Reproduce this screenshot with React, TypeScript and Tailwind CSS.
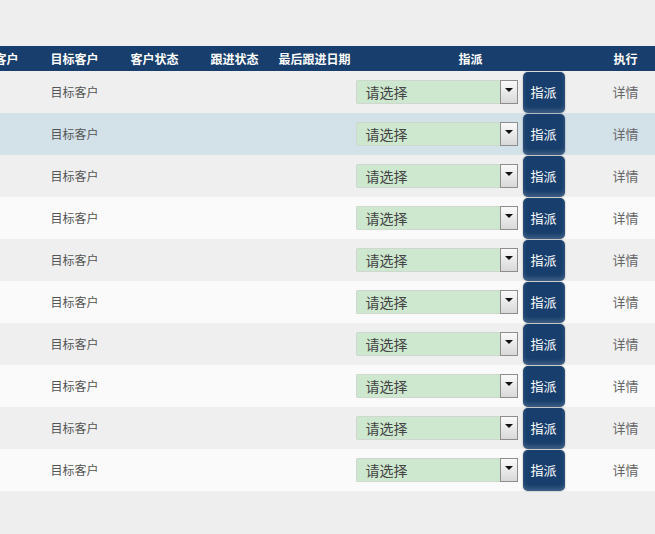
const FONT = { fontFamily: '"Microsoft YaHei", "Noto Sans CJK SC", "Noto Sans", sans-serif' };

const headers = ['意向客户', '目标客户', '客户状态', '跟进状态', '最后跟进日期'];

function AssignSelect() {
  return (
    <div className="flex h-[24px] w-[162px] items-stretch">
      <div className="flex flex-1 items-center rounded-l-[2px] border border-r-0 border-[#cfd8cf] bg-[#cde8cf] pl-[9px] text-[14px] text-[#444]">
        请选择
      </div>
      <div className="flex w-[18px] items-start justify-center border border-[#8e8e8e] bg-gradient-to-b from-[#fafafa] to-[#d9d9d9] pt-[7px]">
        <span className="block h-0 w-0 border-x-[4px] border-t-[4px] border-x-transparent border-t-[#111]" />
      </div>
    </div>
  );
}

function Row({ index }: { index: number }) {
  const bg = index === 1 ? 'bg-[#d3e1e9]' : index % 2 === 0 ? 'bg-[#efefef]' : 'bg-[#fafafa]';
  return (
    <div className={`flex h-[42px] items-center text-[12px] text-[#555] ${bg}`}>
      <div className="w-[80px]" />
      <div className="w-[80px] text-center">目标客户</div>
      <div className="w-[80px]" />
      <div className="w-[80px]" />
      <div className="w-[80px]" />
      <div className="flex w-[232px] items-center gap-[5px] pl-[1px]">
        <AssignSelect />
        <button className="h-[41px] w-[42px] rounded-[5px] bg-[#173e6c] text-[13px] text-white shadow-[0_0_2px_rgba(0,0,0,0.35),inset_0_-3px_4px_rgba(255,255,255,0.18)]">
          指派
        </button>
      </div>
      <div className="w-[78px] text-center text-[13px] text-[#666]">详情</div>
    </div>
  );
}

export default function App() {
  return (
    <div className="h-[534px] w-[655px] overflow-hidden bg-[#eeeeee]" style={FONT}>
      <div className="ml-[-45.5px] w-[710px] pt-[46px]">
        <div className="flex h-[25px] items-center bg-[#173e6c] text-[12px] font-bold text-white">
          {headers.map((h) => (
            <div key={h} className="w-[80px] text-center">
              {h}
            </div>
          ))}
          <div className="w-[232px] text-center">指派</div>
          <div className="w-[78px] text-center">执行</div>
        </div>
        {Array.from({ length: 10 }).map((_, i) => (
          <Row key={i} index={i} />
        ))}
      </div>
    </div>
  );
}
